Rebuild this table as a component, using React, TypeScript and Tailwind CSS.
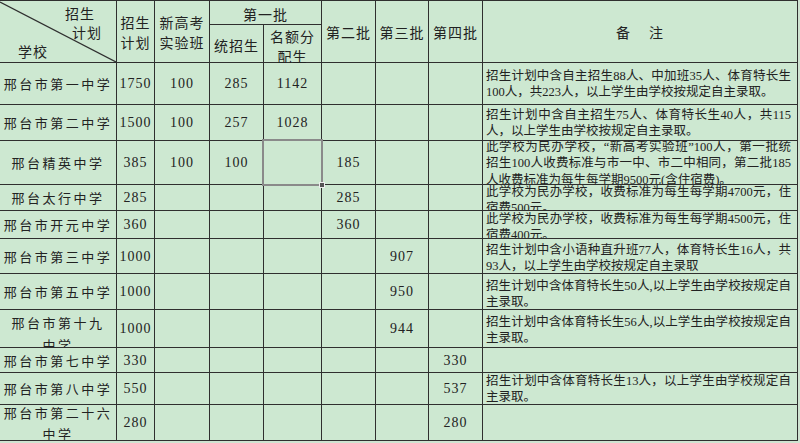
import React from "react";

type Row = {
  name: string[];
  plan: string;
  xgk?: string;
  tz?: string;
  me?: string;
  b2?: string;
  b3?: string;
  b4?: string;
  note: string[];
  nameCls?: string;
  noteCls?: string;
  selected?: boolean;
};

const rows: Row[] = [
  {
    name: ["邢台市第一中学"],
    plan: "1750",
    xgk: "100",
    tz: "285",
    me: "1142",
    note: ["招生计划中含自主招生88人、中加班35人、体育特长生", "100人，共223人，以上学生由学校按规定自主录取。"],
  },
  {
    name: ["邢台市第二中学"],
    plan: "1500",
    xgk: "100",
    tz: "257",
    me: "1028",
    note: ["招生计划中含自主招生75人、体育特长生40人，共115", "人，以上学生由学校按规定自主录取。"],
  },
  {
    name: ["邢台精英中学"],
    plan: "385",
    xgk: "100",
    tz: "100",
    b2: "185",
    selected: true,
    noteCls: "pt-[2px] leading-[16.5px]",
    note: [
      "此学校为民办学校，“新高考实验班”100人，第一批统",
      "招生100人收费标准与市一中、市二中相同，第二批185",
      "人收费标准为每生每学期9500元(含住宿费)。",
    ],
  },
  {
    name: ["邢台太行中学"],
    plan: "285",
    b2: "285",
    noteCls: "pt-[5px]",
    note: ["此学校为民办学校，收费标准为每生每学期4700元，住", "宿费500元。"],
  },
  {
    name: ["邢台市开元中学"],
    plan: "360",
    b2: "360",
    noteCls: "pt-[5px]",
    note: ["此学校为民办学校，收费标准为每生每学期4500元，住", "宿费400元。"],
  },
  {
    name: ["邢台市第三中学"],
    plan: "1000",
    b3: "907",
    noteCls: "pt-[4px]",
    note: ["招生计划中含小语种直升班77人，体育特长生16人，共", "93人，以上学生由学校按规定自主录取"],
  },
  {
    name: ["邢台市第五中学"],
    plan: "1000",
    b3: "950",
    noteCls: "pt-[4px]",
    note: ["招生计划中含体育特长生50人,以上学生由学校按规定自", "主录取。"],
  },
  {
    name: ["邢台市第十九", "中学"],
    plan: "1000",
    b3: "944",
    nameCls: "justify-start pt-[2px] leading-[22px]",
    noteCls: "pt-[2px]",
    note: ["招生计划中含体育特长生56人,以上学生由学校按规定自", "主录取。"],
  },
  {
    name: ["邢台市第七中学"],
    plan: "330",
    b4: "330",
    note: [],
  },
  {
    name: ["邢台市第八中学"],
    plan: "550",
    b4: "537",
    note: ["招生计划中含体育特长生13人，以上学生由学校规定自", "主录取。"],
  },
  {
    name: ["邢台市第二十六", "中学"],
    plan: "280",
    b4: "280",
    note: [],
  },
];

const cell = "bg-[#cde8d1] overflow-hidden";
const head =
  "bg-[#cde8d1] flex flex-col items-center justify-center font-['Noto_Sans_CJK_SC',sans-serif] text-[14px] tracking-[1px] leading-[20px] text-[#222]";
const num =
  "bg-[#cde8d1] flex items-center justify-center font-['Liberation_Serif',serif] text-[14px] tracking-[1px] text-[#222]";

function Num({ v }: { v?: string }) {
  return <div className={num}>{v}</div>;
}

export default function App() {
  return (
    <div className="w-[800px] h-[443px] bg-[#cfe3d1] overflow-hidden [text-autospace:no-autospace]">
      <div className="grid w-[798px] grid-cols-[116px_37px_54px_53px_57px_53px_52px_53px_314px] grid-rows-[23px_37px_41px_35px_43px_25px_27px_34px_35px_37px_24px_31px_35px] gap-px bg-[#2f2f2f] pt-px pr-px pb-px">
        {/* header: diagonal cell */}
        <div className={`${cell} relative row-span-2 flex flex-col pt-[3px] font-['Noto_Sans_CJK_SC',sans-serif] text-[14px] leading-[19px] tracking-[1px] text-[#222]`}>
          <svg className="absolute inset-0 h-full w-full" viewBox="0 0 116 61" preserveAspectRatio="none">
            <line x1="0" y1="1" x2="116" y2="61" stroke="#2f2f2f" strokeWidth="1.2" />
          </svg>
          <div className="pl-[65px]">招生</div>
          <div className="pl-[72px]">计划</div>
          <div className="pl-[18px]">学校</div>
        </div>
        <div className={`${head} row-span-2`}>
          <div>招生</div>
          <div>计划</div>
        </div>
        <div className={`${head} row-span-2`}>
          <div>新高考</div>
          <div>实验班</div>
        </div>
        <div className={`${head} col-span-2 pt-[3px]`}>第一批</div>
        <div className={`${head} row-span-2`}>第二批</div>
        <div className={`${head} row-span-2`}>第三批</div>
        <div className={`${head} row-span-2`}>第四批</div>
        <div className={`${head} row-span-2 !flex-row gap-[18px]`}>
          <span>备</span>
          <span>注</span>
        </div>
        <div className={`${head} pt-[2px]`}>统招生</div>
        <div className={`${head} pt-[4px] leading-[19px]`}>
          <div>名额分</div>
          <div>配生</div>
        </div>

        {rows.map((r, i) => (
          <React.Fragment key={i}>
            <div
              className={`${cell} flex flex-col items-center text-center font-['Noto_Sans_CJK_SC',sans-serif] text-[13px] tracking-[2.5px] text-[#222] ${
                r.nameCls ?? "justify-center leading-[21px]"
              }`}
            >
              {r.name.map((n) => (
                <div key={n} className="whitespace-nowrap">
                  {n}
                </div>
              ))}
            </div>
            <Num v={r.plan} />
            <Num v={r.xgk} />
            <Num v={r.tz} />
            {r.selected ? (
              <div className={`${num} relative overflow-visible`}>
                <div className="absolute -inset-[2px] border-2 border-[#8a8a8a]" />
                <div className="absolute -right-[4px] -bottom-[4px] h-[6px] w-[6px] border border-[#eee] bg-[#555]" />
              </div>
            ) : (
              <Num v={r.me} />
            )}
            <Num v={r.b2} />
            <Num v={r.b3} />
            <Num v={r.b4} />
            <div
              className={`${cell} flex flex-col justify-center pl-[3px] pr-[6px] font-['Liberation_Serif','Noto_Sans_CJK_SC',serif] text-[12.5px] text-[#222] ${
                r.noteCls ?? ""
              } ${r.noteCls?.includes("leading") ? "" : "leading-[16px]"}`}
            >
              {r.note.map((t, j) => (
                <div
                  key={j}
                  className={`whitespace-nowrap ${
                    j < r.note.length - 1 ? "text-justify [text-align-last:justify]" : ""
                  }`}
                >
                  {t}
                </div>
              ))}
            </div>
          </React.Fragment>
        ))}
      </div>
    </div>
  );
}
